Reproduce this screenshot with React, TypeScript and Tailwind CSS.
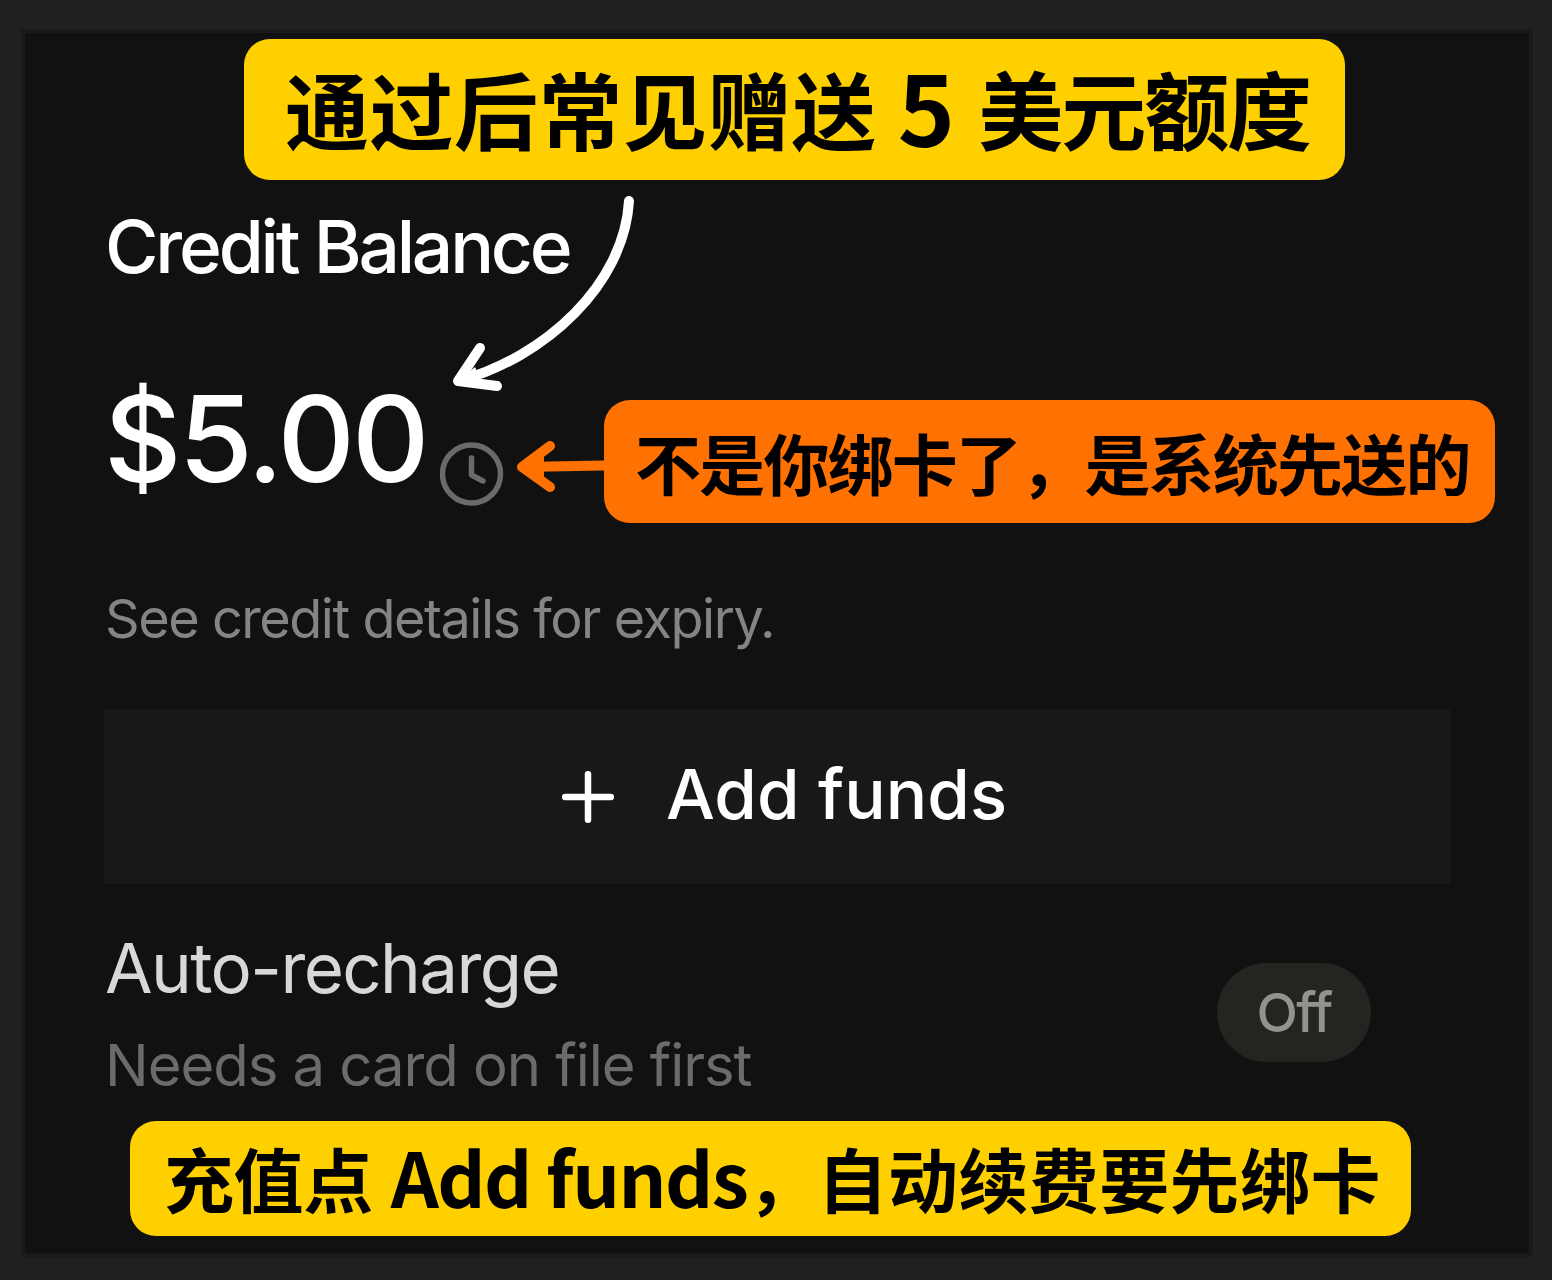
import React from 'react';

interface LabelProps {
  className: string;
  children: React.ReactNode;
}

const Label: React.FC<LabelProps> = ({ className, children }) => (
  <div className={`absolute rounded-[26px] whitespace-nowrap font-bold text-black font-['Noto_Sans_CJK_SC',sans-serif] ${className}`}>
    {children}
  </div>
);

export default function App() {
  return (
    <div className="w-[1552px] h-[1280px] bg-[#202020] pt-[29px] pl-[21px] overflow-hidden font-['Inter',sans-serif]">
      <main className="relative w-[1512px] h-[1228px] bg-[#111111] border-4 border-[#1a1a1a] pl-[79px] pr-[79px] pt-[168px]">
        {/* Balance */}
        <h1 className="h-[92px] pl-px text-[73px] leading-[92px] font-medium tracking-[-3.2px] text-white whitespace-nowrap">
          Credit Balance
        </h1>
        <div className="mt-[68px] h-[156px] flex items-center">
          <span className="w-[336px] text-[120px] leading-[156px] font-medium tracking-[-2.8px] text-white whitespace-nowrap">$5.00</span>
          <svg className="w-16 h-16 mt-[70px]" viewBox="0 0 64 64" fill="none" stroke="#6a6a6a" strokeWidth="5.5" strokeLinecap="round" strokeLinejoin="round">
            <circle cx="31.5" cy="32" r="29" />
            <path d="M31.5 16v17l11.5 6" />
          </svg>
        </div>
        <p className="mt-[67px] h-[70px] pl-px text-[54px] leading-[70px] tracking-[-1.47px] text-[#848484] whitespace-nowrap">
          See credit details for expiry.
        </p>

        {/* Top up */}
        <button className="mt-[55px] w-full h-[175px] pl-[13px] bg-[#181818] flex items-center justify-center gap-[50px] text-[69px] font-medium text-white">
          <svg className="w-14 h-14" viewBox="0 0 56 56" fill="none" stroke="currentColor" strokeWidth="6.5" strokeLinecap="round">
            <path d="M28 5.2v45.6M5.2 28h45.6" />
          </svg>
          <span className="pb-1">Add funds</span>
        </button>

        {/* Auto-recharge */}
        <div className="mt-[39px] flex items-center justify-between pr-[79px]">
          <div className="pl-px whitespace-nowrap">
            <h2 className="h-[90px] text-[69px] leading-[90px] tracking-[-1.6px] text-[#d8d8d8]">Auto-recharge</h2>
            <p className="mt-[14px] h-[76px] text-[58px] leading-[76px] tracking-[-1.04px] text-[#6b6b6b]">Needs a card on file first</p>
          </div>
          <span className="mb-[2px] w-[154px] h-[99px] rounded-full bg-[#242520] flex items-center justify-center text-[54px] font-medium tracking-[-1.8px] text-[#929290]">
            Off
          </span>
        </div>

        {/* Callouts */}
        <Label className="left-[219px] top-[6px] w-[1101px] h-[141px] pl-[41px] bg-[#ffd000] text-[85px] leading-[135px]">
          <span className="text-[84px] leading-none tracking-[0.5px]">通过后常见赠送</span>{' '}
          <span className="ml-[2px] mr-[5px] align-[-3px] text-[97px] leading-none tracking-[-1px]">5</span>{' '}
          <span className="leading-none tracking-[-2.1px]">美元额度</span>
        </Label>
        <Label className="left-[579px] top-[367px] w-[891px] h-[123px] pl-[31px] bg-[#ff7100] text-[66px] leading-[123px] tracking-[-1.8px]">
          不是你绑卡了，是系统先送的
        </Label>
        <Label className="left-[105px] top-[1088px] w-[1281px] h-[115px] pl-[34px] bg-[#ffd000] text-[70px] leading-[114px]">
          <span className="text-[70px] leading-none tracking-[-0.4px]">充值点</span>{' '}
          <span className="ml-[2px] text-[75px] leading-none tracking-[-1.6px]">Add funds</span>
          <span className="text-[70px] leading-none tracking-[0.4px]">，自动续费要先绑卡</span>
        </Label>
        <svg className="absolute left-[425px] top-[157px] w-[200px] h-[320px]" viewBox="450 190 200 320" fill="none" strokeLinecap="round" strokeLinejoin="round" strokeWidth="10">
          <path stroke="#fff" d="M629 201C624 285 545 357 459 381" />
          <path stroke="#fff" d="M480 348L458 381L497 386" />
          <path fill="#fff" d="M458 381l17-14 8 17z" />
          <path stroke="#ff7100" d="M604 465.500L522 467M550 446L522 467L550 487" />
          <path fill="#ff7100" d="M522 467l22-11v22z" />
        </svg>
      </main>
    </div>
  );
}
